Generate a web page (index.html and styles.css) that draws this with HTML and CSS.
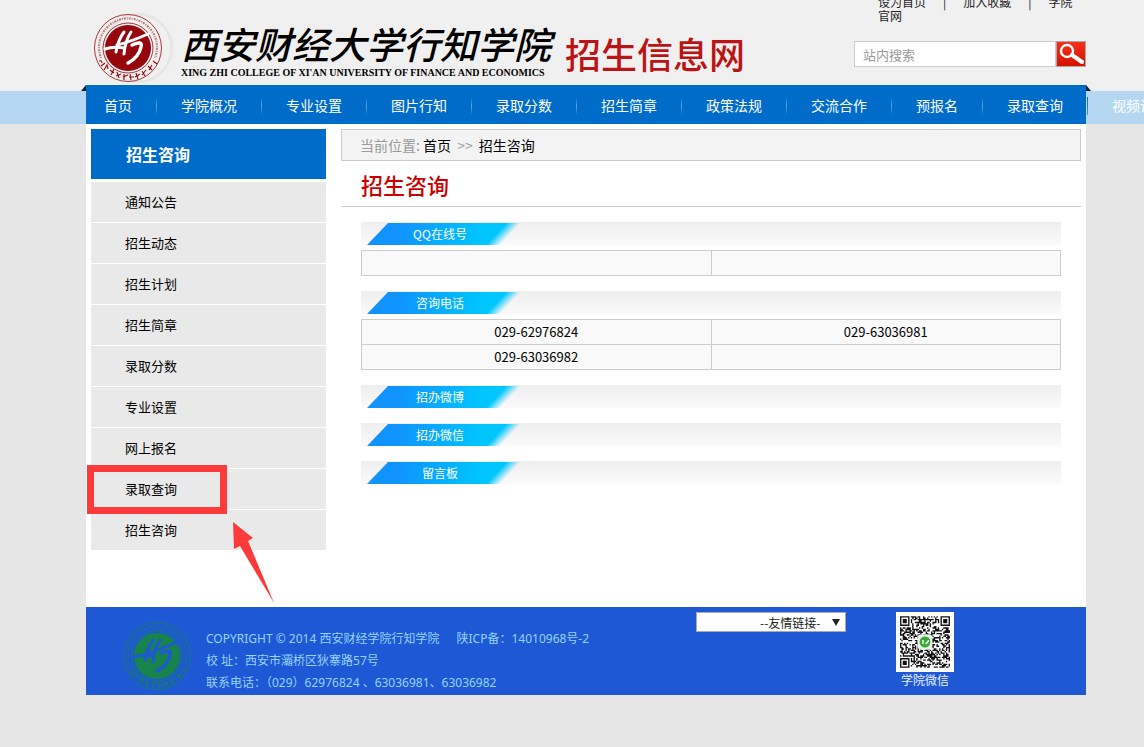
FILE: index.html
```html
<!DOCTYPE html>
<html lang="zh-CN">
<head>
	<meta charset="utf-8">
	<meta name="viewport" content="width=device-width, initial-scale=1">
	<title>招生咨询 | 招生信息网</title>
	<link rel="stylesheet" href="styles.css">
</head>
<body>
	<svg class="defs" aria-hidden="true">
		<symbol id="emblem" viewBox="0 0 70 70">
			<circle cx="35" cy="35" r="33.5" fill="none" stroke="currentColor" stroke-width=".8"/>
			<path d="M8 45A29 29 0 1 1 62 45" fill="none" stroke="currentColor" stroke-width="2" stroke-dasharray="1 1 2 1" opacity=".5"/>
			<path d="M6 48q3-1 3 2M8 53l4-3M11 57l3-5 1 4M17 57l4 3M18 62l3-6M24 59l2 6M23 63l5-2M31 61v6M30 64l5-2M37 61l1 6M36 64h5M43 60l2 6M42 64l5-3M49 58l3 5M49 62l4-5M55 53l4 4M56 57l3-5M60 48l4 3" fill="none" stroke="currentColor" stroke-width="1.1"/>
			<circle cx="35" cy="35" r="25" fill="none" stroke="currentColor" stroke-width=".8"/>
			<circle cx="35" cy="35" r="23" fill="currentColor"/>
			<g class="strokes" fill="none" stroke-linecap="round">
				<path d="M12 36Q20 33 31 35" stroke-width="3"/>
				<path d="M31 19Q25 27 23 39" stroke-width="3"/>
				<path d="M38 19Q32 28 31 41" stroke-width="3"/>
				<path d="M24 32Q37 29 55 21" stroke-width="3"/>
				<path d="M39 32Q50 27 48 34Q46 44 35 50" stroke-width="3.5"/>
			</g>
		</symbol>
	</svg>

	<header class="top">
		<div class="top-inner">
			<a class="logo" href="#">
				<span class="badge"><svg><use href="#emblem"/></svg></span>
				<span class="school">
					<span class="school-cn">西安财经大学行知学院</span>
					<span class="school-en">XING ZHI COLLEGE OF XI'AN UNIVERSITY OF FINANCE AND ECONOMICS</span>
				</span>
				<span class="site">招生信息网</span>
			</a>
			<div class="tools">
				<p class="links"><a href="#">设为首页</a><span>|</span><a href="#">加入收藏</a><span>|</span><a href="#">学院官网</a></p>
				<form class="search">
					<input type="text" placeholder="站内搜索" aria-label="站内搜索">
					<button type="button" aria-label="搜索">
						<svg viewBox="0 0 28 24"><circle cx="10" cy="9" r="6" fill="none" stroke="#fff" stroke-width="2.4"/><path d="M15 13L25 20" stroke="#fff" stroke-width="4" stroke-linecap="round"/></svg>
					</button>
				</form>
			</div>
		</div>
	</header>

	<nav class="nav">
		<ul>
			<li><a href="#">首页</a></li>
			<li><a href="#">学院概况</a></li>
			<li><a href="#">专业设置</a></li>
			<li><a href="#">图片行知</a></li>
			<li><a href="#">录取分数</a></li>
			<li><a href="#">招生简章</a></li>
			<li><a href="#">政策法规</a></li>
			<li><a href="#">交流合作</a></li>
			<li><a href="#">预报名</a></li>
			<li><a href="#">录取查询</a></li>
			<li><a href="#">视频讲座</a></li>
		</ul>
	</nav>

	<main>
		<aside class="side">
			<h2>招生咨询</h2>
			<ul>
				<li><a href="#">通知公告</a></li>
				<li><a href="#">招生动态</a></li>
				<li><a href="#">招生计划</a></li>
				<li><a href="#">招生简章</a></li>
				<li><a href="#">录取分数</a></li>
				<li><a href="#">专业设置</a></li>
				<li><a href="#">网上报名</a></li>
				<li class="marked">
					<a href="#">录取查询</a>
					<svg class="arrow" viewBox="0 0 42 82"><path d="M0 0L20 16L15 19L41 81L7 24L1 27Z" fill="#fc3a3a"/></svg>
				</li>
				<li><a href="#">招生咨询</a></li>
			</ul>
		</aside>
		<div class="content">
			<p class="crumbs">当前位置: <a href="#">首页</a> <span>&gt;&gt;</span> <a href="#">招生咨询</a></p>
			<h1>招生咨询</h1>
			<section>
				<h3><span>QQ在线号</span></h3>
				<table>
					<tr><td></td><td></td></tr>
				</table>
			</section>
			<section>
				<h3><span>咨询电话</span></h3>
				<table>
					<tr><td>029-62976824</td><td>029-63036981</td></tr>
					<tr><td>029-63036982</td><td></td></tr>
				</table>
			</section>
			<section>
				<h3><span>招办微博</span></h3>
			</section>
			<section>
				<h3><span>招办微信</span></h3>
			</section>
			<section>
				<h3><span>留言板</span></h3>
			</section>
		</div>
	</main>

	<footer>
		<svg class="foot-logo"><use href="#emblem"/></svg>
		<div class="info">
			<p>COPYRIGHT © 2014 西安财经学院行知学院 <span class="icp">陕ICP备：14010968号-2</span></p>
			<p>校 址：西安市灞桥区狄寨路57号</p>
			<p>联系电话：（029）62976824 、63036981、63036982</p>
		</div>
		<div class="friend">
			<select aria-label="友情链接">
				<option>--友情链接-</option>
			</select>
		</div>
		<div class="wechat">
			<svg id="qr" viewBox="-3 -3 43 43" preserveAspectRatio="none"></svg>
			<p>学院微信</p>
		</div>
	</footer>

	<script src="qr.js"></script>
</body>
</html>
```
FILE: qr.js
```js
const SIZE = 37;
const svg = document.getElementById("qr");

// 三个定位角
function finder(x, y) {
	for (const [ox, oy] of [[0, 0], [SIZE - 7, 0], [0, SIZE - 7]]) {
		const dx = x - ox, dy = y - oy;
		if (dx < -1 || dx > 7 || dy < -1 || dy > 7) continue;
		const r = Math.max(Math.abs(dx - 3), Math.abs(dy - 3));
		return r === 3 || r <= 1;
	}
	return null;
}

let seed = 62976824;
function next() {
	seed = (seed * 1103515245 + 12345) % 2147483648;
	return seed / 2147483648;
}

let d = "";
for (let y = 0; y < SIZE; y++) {
	for (let x = 0; x < SIZE; x++) {
		const f = finder(x, y);
		const on = f === null ? next() < 0.52 : f;
		if (on) d += `M${x} ${y}h1v1h-1z`;
	}
}
svg.innerHTML = `
	<path d="${d}" fill="#111"/>
	<rect x="13" y="13" width="11" height="11" rx="3" fill="#e8f3e8"/>
	<circle cx="18.5" cy="18.5" r="4" fill="#3aa935"/>
	<path d="M17 20v-3M19 20l2-2v-1" stroke="#fff" stroke-width="1" fill="none"/>
`;
```
FILE: styles.css
```css
*,
*::before,
*::after {
	box-sizing: border-box;
	margin: 0;
	padding: 0;
}

body {
	font: 13px/20px "Noto Sans CJK SC", sans-serif;
	background: #e6e6e6;
	color: #000;
	overflow-x: hidden;
}

ul {
	list-style: none;
}

a {
	color: inherit;
	text-decoration: none;
}

.defs {
	position: absolute;
	width: 0;
	height: 0;
}

.top-inner,
.nav ul,
main,
footer {
	margin: 0 58px 0 86px;
}

/* header */
.top {
	background: #f0f0f0;
}

.top-inner {
	display: flex;
	justify-content: space-between;
	height: 85px;
	overflow: hidden;
}

.logo {
	display: flex;
	white-space: nowrap;
}

.badge {
	width: 80px;
	height: 70px;
	margin: 13px 8px 0 7px;
	color: #95060d;
	background: radial-gradient(circle at 45px 35px, transparent 32px, #e2e2e2 33px, #eaeaea 35px, transparent 36px);
}

.badge svg {
	width: 70px;
	height: 70px;
}

.strokes {
	stroke: var(--hole, #fff);
}

.school {
	display: flex;
	flex-direction: column;
	padding-top: 20px;
	width: 380px;
}

.school-cn {
	font-size: 37px;
	line-height: 46px;
	font-weight: 500;
	font-style: italic;
}

.school-en {
	font: bold 10px/14px "Liberation Serif", serif;
}

.site {
	padding: 30px 0 0 4px;
	font-size: 36px;
	line-height: 46px;
	font-weight: 500;
	color: #bb1414;
}

.tools {
	width: 232px;
}

.links {
	width: 200px;
	margin: -5px 0 18px 24px;
	font-size: 12px;
	line-height: 14px;
	color: #222;
	word-break: break-all;
}

.links span {
	padding: 0 17px;
}

.search {
	display: flex;
	height: 26px;
}

.search input {
	flex: 1;
	min-width: 0;
	border: 1px solid #ccc;
	background: #fff;
	padding: 0 8px;
	font: 13px "Noto Sans CJK SC", sans-serif;
}

.search input::placeholder {
	color: #999;
}

.search button {
	width: 30px;
	border: 1px solid #aaa;
	background: linear-gradient(#f5301d, #d51200);
}

.search svg {
	display: block;
	width: 28px;
	height: 24px;
}

/* nav */
.nav {
	background: linear-gradient(#f0f0f0 6px, #b5d6f0 6px);
}

.nav ul {
	position: relative;
	display: flex;
	height: 39px;
	padding-left: 18px;
	background: #006cc9;
}

.nav ul::before,
.nav ul::after {
	content: "";
	position: absolute;
	top: 0;
	width: 5px;
	height: 6px;
	background: #03213c;
}

.nav ul::before {
	right: 100%;
	clip-path: polygon(100% 0, 100% 100%, 0 100%);
}

.nav ul::after {
	left: 100%;
	clip-path: polygon(0 0, 100% 100%, 0 100%);
}

.nav li {
	flex: none;
	padding: 0 25px 0 24px;
	font-size: 14px;
	line-height: 40px;
	color: #fff;
	background: linear-gradient(transparent, #5fa4e0, transparent) right 12px / 1px 18px no-repeat;
}

.nav li:first-child {
	padding-left: 0;
}

.nav li:nth-child(10) {
	background-image: linear-gradient(#006cc9, #4a9be0);
}

/* main */
main {
	display: flex;
	gap: 15px;
	padding: 5px 5px 57px;
	background: #fff;
}

.side {
	width: 235px;
}

.side h2 {
	margin-bottom: 3px;
	padding-left: 35px;
	font-size: 16px;
	line-height: 50px;
	color: #fff;
	background: #006cc9;
}

.side ul {
	display: flex;
	flex-direction: column;
	gap: 1px;
}

.side li {
	position: relative;
	padding-left: 34px;
	line-height: 40px;
	background: #e9e9e9;
}

.marked::after {
	content: "";
	position: absolute;
	left: -4px;
	top: -4px;
	width: 140px;
	height: 49px;
	border: 7px solid #fc3a3a;
	z-index: 1;
}

.arrow {
	position: absolute;
	left: 142px;
	top: 53px;
	width: 42px;
	height: 82px;
	z-index: 1;
}

.content {
	flex: 1;
}

.crumbs {
	padding: 0 18px;
	border: 1px solid #ccc;
	background: #f3f3f3;
	font-size: 14px;
	line-height: 30px;
	color: #999;
}

.crumbs a {
	color: #000;
}

.crumbs span {
	margin: 0 3px;
}

h1 {
	margin-bottom: 15px;
	padding: 5px 20px 4px;
	border-bottom: 1px solid #ccc;
	font-size: 22px;
	line-height: 36px;
	font-weight: 500;
	color: #c00;
}

section {
	margin: 0 20px 15px;
}

h3 {
	height: 23px;
	padding: 1px 0 0 6px;
	background: linear-gradient(#eee, #fafafa);
}

h3 span {
	position: relative;
	display: block;
	width: 154px;
	padding-right: 8px;
	font-size: 12px;
	line-height: 22px;
	font-weight: 400;
	text-align: center;
	color: #fff;
	z-index: 0;
}

/* slanted tab, right edge fades out */
h3 span::before {
	content: "";
	position: absolute;
	inset: 0;
	z-index: -1;
	background: linear-gradient(100deg, #1093ff 20%, #00c6ff 75%);
	clip-path: polygon(0 100%, 21px 0, 100% 0, 100% 100%);
	mask-image: linear-gradient(133deg, #000 80%, transparent 88%);
}

table {
	width: 100%;
	margin-top: 5px;
	border-collapse: collapse;
	table-layout: fixed;
}

td {
	height: 25px;
	border: 1px solid #ccc;
	background: #f9f9f9;
	line-height: 24px;
	text-align: center;
}

/* footer */
footer {
	display: flex;
	height: 88px;
	padding-left: 36px;
	background: #1e58d4;
	color: #96d2fa;
	font: 12px/22px "Noto Sans", "Noto Sans CJK SC", sans-serif;
}

.foot-logo {
	--hole: #1e58d4;
	width: 70px;
	height: 70px;
	margin-top: 14px;
	color: #17844c;
}

.info {
	flex: 1;
	padding: 21px 0 0 14px;
	white-space: nowrap;
}

.icp {
	padding-left: 14px;
}

.friend {
	position: relative;
	width: 150px;
	height: 20px;
	margin: 5px 50px 0 0;
}

.friend select {
	width: 100%;
	height: 20px;
	padding-left: 63px;
	appearance: none;
	border: 1px solid #a9a9a9;
	border-radius: 0;
	background: #fff;
	color: #222;
	font: 12px "Noto Sans CJK SC", sans-serif;
}

.friend::after {
	content: "";
	position: absolute;
	right: 6px;
	top: 7px;
	border: solid transparent;
	border-width: 7px 4px 0;
	border-top-color: #222;
}

.wechat {
	margin: 5px 132px 0 0;
	text-align: center;
	line-height: 18px;
	color: #e8f0ff;
}

.wechat svg {
	display: block;
	width: 58px;
	height: 60px;
	background: #fff;
}
```
